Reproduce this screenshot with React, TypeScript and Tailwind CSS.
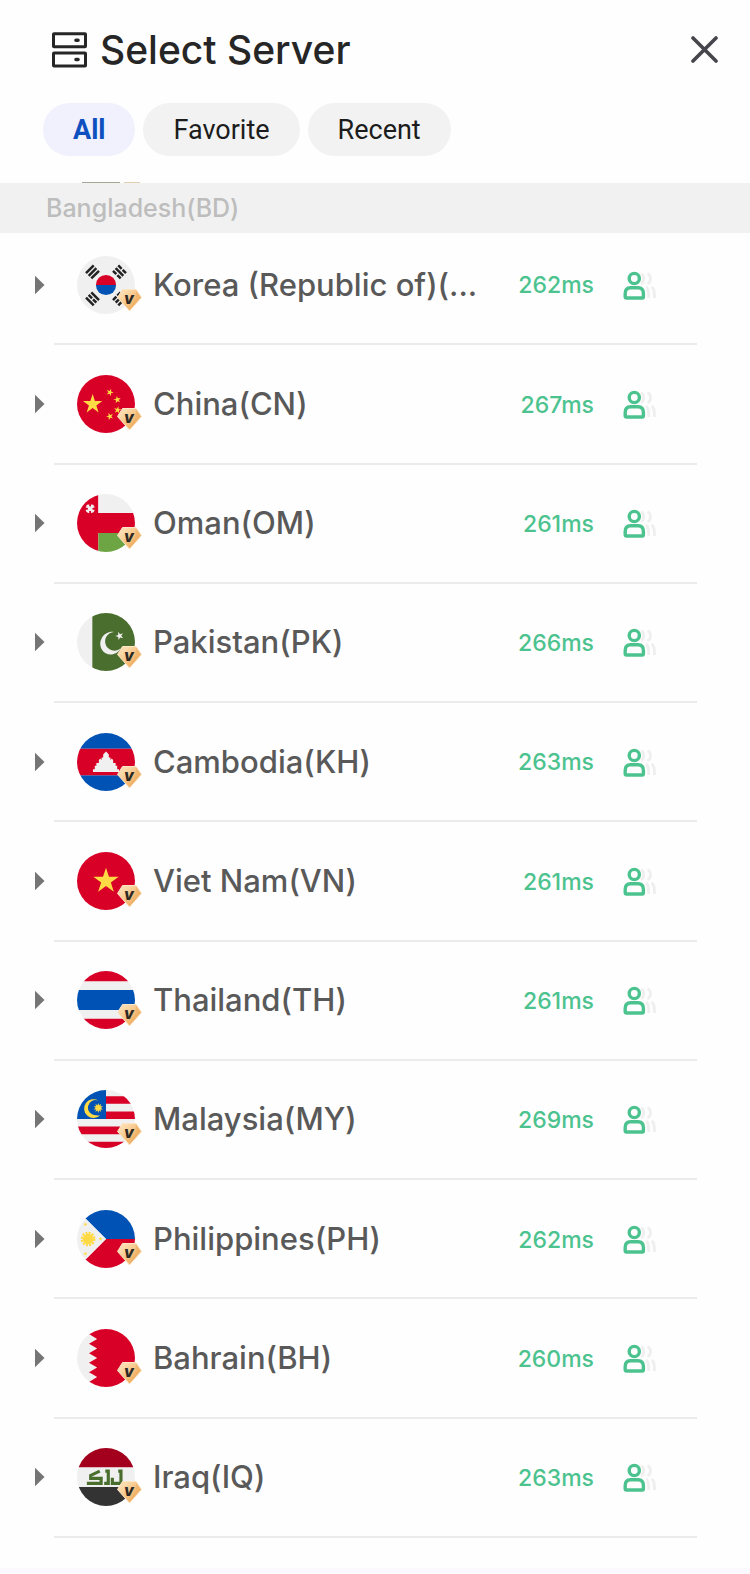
import { useState, type ReactNode } from 'react';

const TABS = ['All', 'Favorite', 'Recent'];

const RED = '#d80027';
const BLUE = '#0052b4';
const WHITE = '#f0f0f0';
const YELLOW = '#ffda44';

type Server = { name: string; ping: number; flag: ReactNode };

// Every flag is drawn on a 512 grid and clipped to a circle by <Flag>.
const SERVERS: Server[] = [
  { name: 'Korea (Republic of)(...', ping: 262, flag: <KoreaFlag /> },
  { name: 'China(CN)', ping: 267, flag: <ChinaFlag /> },
  { name: 'Oman(OM)', ping: 261, flag: <OmanFlag /> },
  { name: 'Pakistan(PK)', ping: 266, flag: <PakistanFlag /> },
  { name: 'Cambodia(KH)', ping: 263, flag: <CambodiaFlag /> },
  { name: 'Viet Nam(VN)', ping: 261, flag: <VietnamFlag /> },
  { name: 'Thailand(TH)', ping: 261, flag: <ThailandFlag /> },
  { name: 'Malaysia(MY)', ping: 269, flag: <MalaysiaFlag /> },
  { name: 'Philippines(PH)', ping: 262, flag: <PhilippinesFlag /> },
  { name: 'Bahrain(BH)', ping: 260, flag: <BahrainFlag /> },
  { name: 'Iraq(IQ)', ping: 263, flag: <IraqFlag /> },
];

export default function App() {
  const [tab, setTab] = useState('All');

  return (
    <main className="flex min-h-screen flex-col border-b-[6px] border-[#fcf9fe] bg-[#fefefe] font-['Inter',sans-serif] [font-optical-sizing:none]">
      <header className="flex h-[76px] items-center pt-6 pr-8 pl-[52px]">
        <ServerIcon />
        <h1 className="ml-[13px] flex-1 text-[39px] leading-[52px] font-medium text-[#262626]">
          Select Server
        </h1>
        <button type="button" aria-label="Close">
          <CloseIcon />
        </button>
      </header>

      <nav className="mt-[27px] flex gap-2 px-[43px] font-['Roboto',sans-serif]">
        {TABS.map((t) => (
          <button
            key={t}
            type="button"
            aria-pressed={t === tab}
            onClick={() => setTab(t)}
            className={
              t === tab
                ? 'h-[53px] rounded-full bg-[#f1f1fe] px-[30px] pt-0.5 text-[27px] font-bold text-[#0f50c0]'
                : 'h-[53px] rounded-full bg-[#f2f2f2] px-[30px] pt-0.5 text-[27px] text-[#1c1c1c]'
            }
          >
            {t}
          </button>
        ))}
      </nav>

      {/* last pixel row of the entry that is scrolled under the section bar */}
      <div className="mt-[26px] flex h-px gap-1 pl-[82px]">
        <span className="w-[38px] bg-[#a3a894]" />
        <span className="w-4 bg-[#dccfae]" />
      </div>

      <h2 className="z-10 h-[50px] bg-[#f1f1f1] pl-[46px] text-[25px] leading-[50px] font-medium text-[#bdbdbd]">
        Bangladesh(BD)
      </h2>

      <ul className="-mt-[7px] flex flex-1 flex-col pb-[30px]">
        {SERVERS.map((s) => (
          <ServerRow key={s.name} server={s} />
        ))}
      </ul>
    </main>
  );
}

function ServerRow({ server }: { server: Server }) {
  return (
    <li className="flex min-h-[100px] flex-1 pr-[53px]">
      <button type="button" aria-label={`Expand ${server.name}`} className="w-[54px] pb-0.5 pl-[34px]">
        <svg width="11" height="20" viewBox="0 0 11 20">
          <path d="M1 0.800 10.500 10 1 19.200z" fill="#757575" />
        </svg>
      </button>
      <div className="flex min-w-0 flex-1 items-center border-b-2 border-[#ebebeb] pr-[39px] pl-[23px]">
        <div className="relative shrink-0">
          <Flag>{server.flag}</Flag>
          <VipBadge />
        </div>
        <span className="ml-[18px] min-w-0 flex-1 truncate text-[31px] leading-10 font-medium text-[#595959]">
          {server.name}
        </span>
        <div className="flex shrink-0 items-center gap-7 pt-0.5">
          <span className="text-right text-[23px] font-medium text-[#4cc38f]">{server.ping}ms</span>
          <LoadIcon />
        </div>
      </div>
    </li>
  );
}

function Flag({ children }: { children: ReactNode }) {
  return (
    <svg width="58" height="58" viewBox="0 0 512 512" className="rounded-full">
      {children}
    </svg>
  );
}

function VipBadge() {
  return (
    <svg width="27" height="24" viewBox="0 0 27 24" className="absolute top-8 left-[39px]">
      <defs>
        <linearGradient id="vip" x1="0" y1="0" x2="1" y2="1">
          <stop offset="0.2" stopColor="#fcdcae" />
          <stop offset="0.8" stopColor="#f0ac5c" />
        </linearGradient>
      </defs>
      <path
        d="M6.500 1.500h13.500l5.500 8-12 13.500L1.500 9.500z"
        fill="url(#vip)"
        stroke="#fbe6c8"
        strokeWidth="1"
        strokeLinejoin="round"
      />
      <path d="M20 2l5 7.500L13.500 22.500l6-12z" fill="#eeae62" opacity="0.5" />
      <text x="13" y="15.500" textAnchor="middle" fontSize="16" fontWeight="800" fontStyle="italic" fill="#2d2a26">
        v
      </text>
    </svg>
  );
}

function LoadIcon() {
  return (
    <svg width="36" height="30" viewBox="0 0 36 30" fill="none" strokeWidth="3.400">
      <g stroke="#efefef" strokeWidth="2.800">
        <path d="M19 2.800c3.600 1.500 3.600 8.400 0 9.900M25.500 2.800c4 1.500 4 8.400 0 9.900" />
        <path d="M24 16c2.300 1.400 2.700 4 2.700 11M29.500 16c2.600 1.400 3 4 3 11" />
      </g>
      <circle cx="12.300" cy="7.500" r="5.100" stroke="#4cc38f" />
      <path
        d="M8.500 16.800h7.600c3.600 0 5.300 2.400 5.300 5.800v3.200c0 .8-.4 1.200-1.200 1.200H4.400c-.8 0-1.200-.4-1.200-1.200v-3.200c0-3.400 1.700-5.800 5.300-5.800z"
        stroke="#4cc38f"
      />
    </svg>
  );
}

function ServerIcon() {
  return (
    <svg width="35" height="36" viewBox="0 0 35 36" fill="none" stroke="#262626" strokeWidth="3">
      <rect x="1.500" y="1.800" width="32" height="13" rx="0.500" />
      <rect x="1.500" y="21" width="32" height="13" rx="0.500" />
      <path d="M24 8.300h2M24 27.500h2" strokeWidth="3.600" strokeLinecap="round" />
    </svg>
  );
}

function CloseIcon() {
  return (
    <svg width="28" height="28" viewBox="0 0 28 28" stroke="#45454b" strokeWidth="3.600" strokeLinecap="round">
      <path d="M3 2l23 23M26 2L3 25" />
    </svg>
  );
}

function Star({ x, y, r, fill = YELLOW, turn = 0 }: { x: number; y: number; r: number; fill?: string; turn?: number }) {
  return (
    <path
      d="M0-100 22.500-31 95-31 36.300 11.800 58.800 81 0 38.200-58.800 81-36.300 11.800-95-31-22.500-31z"
      transform={`translate(${x} ${y}) rotate(${turn}) scale(${r / 100})`}
      fill={fill}
    />
  );
}

// Three bars around the origin; a bar listed in `broken` is split in the middle.
function Trigram({ x, y, turn, broken }: { x: number; y: number; turn: number; broken: number[] }) {
  return (
    <g transform={`translate(${x} ${y}) rotate(${turn})`} stroke="#222" strokeWidth="22">
      {[-33, 0, 33].map((dy, i) => (
        <path key={dy} d={broken.includes(i) ? `M-48 ${dy}h42M6 ${dy}h42` : `M-48 ${dy}h96`} />
      ))}
    </g>
  );
}

function KoreaFlag() {
  return (
    <>
      <path d="M0 0h512v512H0z" fill={WHITE} />
      <path d="M167 256a89 89 0 0 1 178 0z" fill={RED} />
      <path d="M167 256a89 89 0 0 0 178 0z" fill={BLUE} />
      <Trigram x={137} y={141} turn={-45} broken={[]} />
      <Trigram x={375} y={141} turn={45} broken={[0, 2]} />
      <Trigram x={137} y={378} turn={45} broken={[1]} />
      <Trigram x={375} y={378} turn={-45} broken={[0, 1, 2]} />
    </>
  );
}

function ChinaFlag() {
  return (
    <>
      <path d="M0 0h512v512H0z" fill={RED} />
      <Star x={138} y={258} r={90} />
      <Star x={290} y={154} r={34} turn={20} />
      <Star x={356} y={218} r={34} turn={-10} />
      <Star x={358} y={310} r={34} turn={10} />
      <Star x={290} y={366} r={34} turn={-20} />
    </>
  );
}

function OmanFlag() {
  return (
    <>
      <path d="M0 0h189v512H0zM180 167h332v178H180z" fill={RED} />
      <path d="M189 0h323v167H189z" fill={WHITE} />
      <path d="M189 345h323v167H189z" fill="#6da544" />
      <g stroke={WHITE} strokeWidth="18" fill="none">
        <path d="M86 100l60 60M146 100l-60 60" />
        <path d="M102 92v76M130 92v76M78 116h76M78 144h76" strokeWidth="12" />
      </g>
    </>
  );
}

function PakistanFlag() {
  return (
    <>
      <path d="M134 0h378v512H134z" fill="#496e2d" />
      <path d="M0 0h134v512H0z" fill={WHITE} />
      <path
        d="M385 312c-26 24-67 29-98 9-39-25-50-76-26-115 15-23 38-36 63-39-42-6-84 17-104 51-29 49-14 108 33 138 47 26 106 6 132-44z"
        fill={WHITE}
      />
      <Star x={376} y={202} r={38} fill={WHITE} turn={-20} />
    </>
  );
}

function CambodiaFlag() {
  return (
    <>
      <path d="M0 0h512v139H0zM0 373h512v139H0z" fill={BLUE} />
      <path d="M0 139h512v234H0z" fill={RED} />
      <path
        d="M371 345v-24h-16v-32h-14v-24h-22v-26l-12-14-12 14v-22h-14v-28l-25-26-25 26v28h-14v22l-12-14-12 14v26h-22v24h-14v32h-16v24z"
        fill={WHITE}
      />
    </>
  );
}

function VietnamFlag() {
  return (
    <>
      <path d="M0 0h512v512H0z" fill={RED} />
      <Star x={256} y={256} r={118} />
    </>
  );
}

function ThailandFlag() {
  return (
    <>
      <path d="M0 90h512v77H0zM0 345h512v77H0z" fill={WHITE} />
      <path d="M0 0h512v90H0zM0 422h512v90H0z" fill={RED} />
      <path d="M0 167h512v178H0z" fill={BLUE} />
    </>
  );
}

function MalaysiaFlag() {
  return (
    <>
      <path d="M256 0h256v512H0V256h256z" fill={WHITE} />
      <path d="M256 55h256v67H256zM256 189h256v67H256zM0 323h512v67H0zM0 456h512v56H0z" fill={RED} />
      <path d="M0 0h256v256H0z" fill={BLUE} />
      <path d="M170 222a67 67 0 1 1 20-128 83 83 0 1 0 15 128c-10 4-24 5-35 0z" fill={YELLOW} />
      <Star x={188} y={158} r={44} />
      <Star x={188} y={158} r={44} turn={180} />
    </>
  );
}

function PhilippinesFlag() {
  return (
    <>
      <path d="M0 0h512v256H256z" fill={BLUE} />
      <path d="M256 256h256v256H0z" fill={RED} />
      <path d="M0 0l256 256L0 512z" fill={WHITE} />
      <circle cx="98" cy="256" r="46" fill={YELLOW} />
      <circle cx="98" cy="256" r="52" fill="none" stroke={YELLOW} strokeWidth="26" strokeDasharray="17 10" />
      <Star x={74} y={128} r={20} />
      <Star x={74} y={386} r={20} />
      <Star x={208} y={256} r={20} />
    </>
  );
}

function BahrainFlag() {
  return (
    <>
      <path d="M0 0h512v512H0z" fill={WHITE} />
      <path
        d="M512 0H106v45l72 43-72 42 72 42-72 42 72 42-72 42 72 42-72 42 72 42-72 43v45h406z"
        fill={RED}
      />
    </>
  );
}

function IraqFlag() {
  return (
    <>
      <path d="M0 171h512v174H0z" fill={WHITE} />
      <path d="M0 0h512v171H0z" fill="#a2001d" />
      <path d="M0 345h512v167H0z" fill="#333" />
      <g fill="none" stroke="#496e2d" strokeWidth="28">
        <path d="M87 312h126v-44h-92v-26l80-38M276 190v122h-36M250 204h26M312 262v50h76V190M364 204h24" />
      </g>
    </>
  );
}
